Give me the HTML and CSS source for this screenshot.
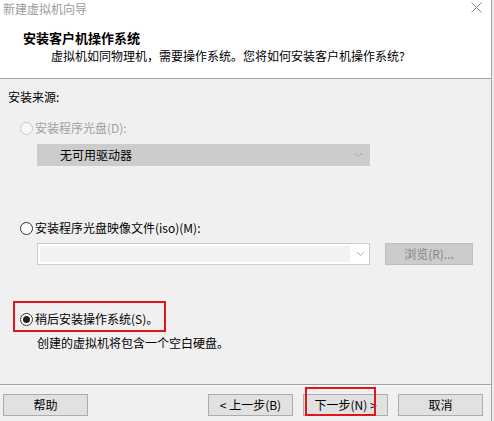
FILE: index.html
```html
<!DOCTYPE html>
<html lang="zh-CN">
<head>
<meta charset="utf-8">
<title>新建虚拟机向导</title>
<link rel="stylesheet" href="styles.css">
</head>
<body>
<div class="window">
  <div class="top">
    <div class="titlebar">
      <span class="wtitle">新建虚拟机向导</span>
      <svg class="close" width="11" height="11" viewBox="0 0 11 11"><path d="M0.5 0.5 L10.5 10.5 M10.5 0.5 L0.5 10.5" stroke="#8a8a8a" stroke-width="1" fill="none"/></svg>
    </div>
    <div class="head">
      <div class="h-title">安装客户机操作系统</div>
      <div class="h-sub">虚拟机如同物理机，需要操作系统。您将如何安装客户机操作系统?</div>
    </div>
  </div>
  <div class="body">
    <div class="section-label">安装来源:</div>
    <div class="radio-row r1 disabled"><span class="radio"></span><span>安装程序光盘(D):</span></div>
    <div class="combo combo-disabled">
      <span class="combo-text">无可用驱动器</span>
      <svg class="chev" width="7" height="4" viewBox="0 0 7 4"><polyline points="0,0 3.5,3.5 7,0" fill="none" stroke="#a8a8a8" stroke-width="1"/></svg>
    </div>
    <div class="radio-row r2"><span class="radio"></span><span>安装程序光盘映像文件(iso)(M):</span></div>
    <div class="iso-row">
      <div class="combo combo-edit">
        <span class="edit"></span>
        <span class="chev-area"><svg class="chev" width="7" height="4" viewBox="0 0 7 4"><polyline points="0,0 3.5,3.5 7,0" fill="none" stroke="#a8a8a8" stroke-width="1"/></svg></span>
      </div>
      <div class="browse">浏览(R)...</div>
    </div>
    <div class="mark-box">
      <div class="radio-row r3"><span class="radio checked"></span><span>稍后安装操作系统(S)。</span></div>
    </div>
    <div class="desc">创建的虚拟机将包含一个空白硬盘。</div>
  </div>
  <div class="footer">
    <div class="btn">帮助</div>
    <div class="nav">
      <div class="btn">&lt; 上一步(B)</div>
      <div class="next-wrap">
        <div class="btn">下一步(N) &gt;</div>
        <span class="next-mark"></span>
      </div>
      <div class="btn">取消</div>
    </div>
  </div>
</div>
</body>
</html>
```
FILE: styles.css
```css
* { box-sizing: border-box; }
html, body { margin: 0; padding: 0; }
body {
  background: #ececec;
  font-family: "Noto Sans CJK SC", "Microsoft YaHei", sans-serif;
  font-size: 12px;
  color: #000;
}
.window {
  width: 492px;
  height: 421px;
  background: #f0f0f0;
  border-right: 1px solid #a6a6a6;
  display: flex;
  flex-direction: column;
}
.top {
  background: #fff;
  height: 79px;
  border-bottom: 1px solid #a0a0a0;
  flex: none;
}
.titlebar {
  height: 20px;
  display: flex;
  justify-content: space-between;
  align-items: flex-start;
  padding: 0 9px 0 3px;
}
.wtitle {
  color: #9a9a9a;
  line-height: 16px;
  margin-top: 1px;
}
.close { margin-top: 2px; }
.head { padding-top: 10px; }
.h-title {
  font-size: 13px;
  font-weight: bold;
  line-height: 16px;
  padding-left: 23px;
}
.h-sub {
  margin-top: 2px;
  line-height: 16px;
  padding-left: 51px;
}
.body {
  flex: 1;
  padding: 10px 0 0 8px;
}
.section-label { line-height: 16px; height: 16px; }
.radio-row {
  display: flex;
  align-items: center;
  gap: 2px;
  height: 16px;
  line-height: 16px;
}
.r1 { margin: 15px 0 0 12px; }
.r2 { margin: 54px 0 0 12px; }
.radio {
  width: 13px;
  height: 13px;
  border-radius: 50%;
  border: 1px solid #333;
  background: #fff;
  display: inline-flex;
  align-items: center;
  justify-content: center;
  flex: none;
}
.radio.checked::after {
  content: "";
  width: 7px;
  height: 7px;
  border-radius: 50%;
  background: #222;
}
.disabled { color: #a0a0a0; }
.disabled .radio { border-color: #c8c8c8; background: #f7f7f7; }
.combo {
  width: 333px;
  height: 22px;
  display: flex;
  align-items: center;
}
.combo-disabled {
  margin: 8px 0 0 29px;
  background: #cccccc;
  border: 1px solid #cccccc;
  padding: 0 7px 0 22px;
  justify-content: space-between;
}
.combo-text { line-height: 16px; }
.iso-row {
  display: flex;
  gap: 15px;
  margin: 7px 0 0 29px;
}
.combo-edit {
  background: #fff;
  border: 1px solid #cccccc;
  padding: 2px 0 2px 2px;
  align-items: stretch;
}
.edit { width: 310px; background: #f2f2f2; }
.chev-area {
  flex: 1;
  display: flex;
  align-items: center;
  padding-left: 7px;
}
.browse {
  width: 88px;
  height: 22px;
  background: #cccccc;
  border: 1px solid #bfbfbf;
  color: #838383;
  text-align: center;
  line-height: 20px;
}
.mark-box {
  width: 153px;
  margin: 36px 0 0 5px;
  border: 2px solid #e0161d;
  padding: 8px 0 3px 5px;
}
.desc {
  margin-top: 3px;
  padding-left: 29px;
  line-height: 16px;
}
.footer {
  flex: none;
  height: 37px;
  border-top: 1px solid #a0a0a0;
  box-shadow: inset 0 1px 0 #fff;
  padding: 9px 8px 0 3px;
  display: flex;
  justify-content: space-between;
  align-items: flex-start;
}
.nav { display: flex; gap: 10px; }
.btn {
  width: 85px;
  height: 22px;
  background: #e1e1e1;
  border: 1px solid #adadad;
  text-align: center;
  line-height: 20px;
  white-space: nowrap;
}
.next-wrap { position: relative; }
.next-mark {
  position: absolute;
  left: 2px;
  top: -7px;
  width: 71px;
  height: 29px;
  border: 2px solid #e0161d;
}
```
